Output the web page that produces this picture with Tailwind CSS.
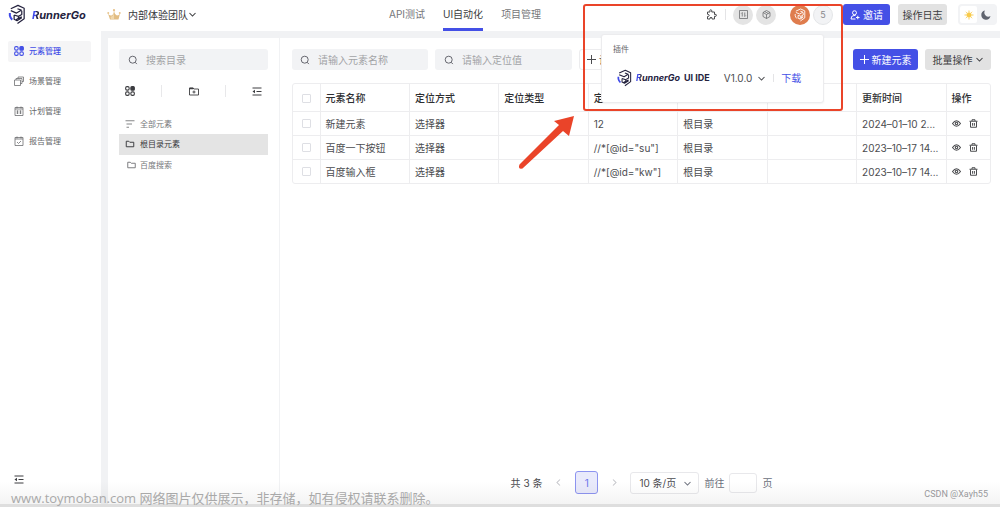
<!DOCTYPE html>
<html lang="zh-CN">
<head>
<meta charset="utf-8">
<meta name="viewport" content="width=device-width, initial-scale=1">
<title>RunnerGo</title>
<script src="https://cdn.jsdelivr.net/npm/@tailwindcss/browser@4"></script>
</head>
<body class="relative flex min-h-screen flex-col overflow-x-hidden bg-white font-['Inter','Noto_Sans_CJK_SC',sans-serif] text-[10px] leading-4 text-[#4b4c4f]">

<svg class="hidden" aria-hidden="true">
  <symbol id="mark" viewBox="0 0 36 44">
    <g fill="none" stroke-linejoin="round" stroke="#25233f" stroke-width="2.600">
      <path d="M5 10 20 3l13 6v22L19 41"/>
      <path d="M5 14l12 5 10-6-8-3"/>
      <path d="M12 23l9 3v4l-5 3M21 26l7-4v-8M21 30l7-3M12 23v9l6 3 10-6"/>
      <path d="M3 19v5q1 5 5 9" stroke="#3f49e8" stroke-width="4.200"/>
    </g>
  </symbol>
  <symbol id="search" viewBox="0 0 16 16"><g fill="none" stroke="currentColor" stroke-width="1.6"><circle cx="7.5" cy="7.5" r="5.6"/><path d="m11.2 11.5 3 3"/></g></symbol>
  <symbol id="down" viewBox="0 0 12 12"><path d="m2 4 4 4 4-4" fill="none" stroke="currentColor" stroke-width="1.4"/></symbol>
  <symbol id="apps" viewBox="0 0 20 20"><g fill="none" stroke="currentColor" stroke-width="2.2"><rect x="1.3" y="1.3" width="7" height="7" rx="2.6"/><rect x="11.7" y="1.3" width="7" height="7" rx="2" fill="currentColor"/><rect x="1.3" y="11.7" width="7" height="7" rx="2.6"/><rect x="11.7" y="11.7" width="7" height="7" rx="2.6"/></g></symbol>
  <symbol id="folder" viewBox="0 0 18 16"><path d="M1.5 13.5v-11h5l2 2h8v9z" fill="none" stroke="currentColor" stroke-width="1.9" stroke-linejoin="round"/></symbol>
  <symbol id="indent" viewBox="0 0 20 18"><path d="M1 2h18M9 9h10M1 16h18" fill="none" stroke="currentColor" stroke-width="2"/><path d="M1 9l5-3.5v7z" fill="currentColor"/></symbol>
  <symbol id="eye" viewBox="0 0 18 14"><g fill="none" stroke="currentColor" stroke-width="2.2"><path d="M1 7q8-11 16 0-8 11-16 0z"/><circle cx="9" cy="7" r="2.4"/></g></symbol>
  <symbol id="trash" viewBox="0 0 18 18"><path d="M1 4.500h16M6 4V1.500h6V4M3 5v11.500h12V5M7.200 8v5.500M10.800 8v5.500" fill="none" stroke="currentColor" stroke-width="2"/></symbol>
</svg>

<header class="flex h-[31px] shrink-0 items-center pb-[2px]">
  <a href="#" class="ml-[8px] flex w-[99px] items-center gap-[6px] text-[11px] font-bold text-[#25233f]">
    <svg class="h-[21px] w-[18px] shrink-0"><use href="#mark"/></svg>
    <span class="italic"><span class="bg-linear-to-r from-[#3f49e8] from-55% to-[#25233f] to-65% bg-clip-text text-transparent">R</span>unnerGo</span>
  </a>
  <button class="flex w-[282px] items-center whitespace-nowrap text-[#38393c]">
    <svg class="mr-[7px] h-[11px] w-[14px]" viewBox="0 0 28 22"><path d="M2 9q3 5 7 4 5-2 5-10 1 8 6 10 4 0 6-4l-3 12H6z" fill="#e2bd83"/><path d="M14 5q-1 9-7 11l1 4h6z" fill="#f0d7ab"/><g fill="#e8c48c"><circle cx="2.500" cy="8" r="2"/><circle cx="14" cy="2.500" r="2.300"/><circle cx="25.500" cy="8" r="2"/></g></svg>
    内部体验团队
    <svg class="size-[9px]"><use href="#down"/></svg>
  </button>
  <nav class="flex h-[31px] translate-y-px gap-[18px] whitespace-nowrap text-[#76777a]">
    <a href="#" class="pt-[6px]">API测试</a>
    <a href="#" class="border-b-[3px] border-[#4450e6] pt-[6px] text-[#3c3d40]">UI自动化</a>
    <a href="#" class="pt-[6px]">项目管理</a>
  </nav>
  <div class="ml-auto flex items-center pr-[3px]">
    <button aria-label="插件" class="mr-[7px] border-r border-[#e4e4e6] pr-[8px]"><svg class="size-[11px]" viewBox="0 0 22 22"><path d="M3 6h5q-1.500-4.500 1.500-4.500T11.500 6H17v5q4-1.500 4 1.500t-4 2V20h-5q.5-3.500-2-3.500T8 20H3v-5q3.500 0 3.500-2.200T3 10.500z" fill="none" stroke="#4b4c4f" stroke-width="2" stroke-linejoin="round"/></svg></button>
    <button aria-label="环境" class="mr-[3px] flex size-[20px] items-center justify-center rounded-full bg-[#e4e4e4] text-[#66676a]"><svg class="size-[9px]" viewBox="0 0 18 18"><path d="M1 1h16v16H1zM6.500 13V5L4.500 7M11.500 5v8l2-2" fill="none" stroke="currentColor" stroke-width="1.500"/></svg></button>
    <button aria-label="组件" class="mr-[14px] flex size-[20px] items-center justify-center rounded-full bg-[#e4e4e4] text-[#66676a]"><svg class="size-[9px]" viewBox="0 0 18 18"><path d="M9 1l7 4v8l-7 4-7-4V5zM2 5l7 4 7-4M9 9v8M5.500 3l7 4" fill="none" stroke="currentColor" stroke-width="1.500"/></svg></button>
    <button aria-label="账户" class="mr-[3px] flex size-[20px] items-center justify-center rounded-full bg-[#df7c4d]"><svg class="size-[14px]" viewBox="0 0 36 44" fill="none" stroke="#fff" stroke-width="2.800"><path d="M5 10 20 3l13 6v22L19 41M5 14l12 5 10-6-8-3M12 23l9 3v4l-5 3M21 26l7-4v-8M21 30l7-3M12 23v9l6 3 10-6M3 19v5q1 5 5 9"/></svg></button>
    <button class="mr-[10px] size-[20px] rounded-full border border-[#e4e6e8] bg-[#f2f3f5] text-[9px] text-[#88898c]">5</button>
    <button class="mr-[8px] flex h-[21px] w-[47px] items-center justify-center gap-[3px] rounded-[3px] bg-[#4450e6] whitespace-nowrap text-white"><svg class="size-[10px]" viewBox="0 0 20 20" fill="none" stroke="currentColor" stroke-width="2"><circle cx="9" cy="5.500" r="4"/><path d="M11 11H8q-6 0-6 7h9M12 15h7M15.500 11.500v7"/></svg>邀请</button>
    <button class="mr-[11px] h-[21px] w-[49px] rounded-[3px] bg-[#e2e2e2] whitespace-nowrap text-[#3c3d40]">操作日志</button>
    <div class="flex h-[21px] w-[39px] items-center rounded-[4px] bg-[#f2f3f5] p-[2px]">
      <button aria-label="浅色" class="flex h-[17px] w-[17px] items-center justify-center rounded-[2px] bg-white"><svg class="size-[10px]" viewBox="0 0 20 20" stroke="#f8cb4b" stroke-width="1.800"><circle cx="10" cy="10" r="4.500" fill="#f8cb4b"/><path d="M10 1v3M10 16v3M1 10h3M16 10h3M3.600 3.600l2 2M14.400 14.400l2 2M3.600 16.400l2-2M14.400 5.600l2-2"/></svg></button>
      <button aria-label="深色" class="flex h-[17px] w-[18px] items-center justify-center"><svg class="size-[10px]" viewBox="0 0 20 20"><path d="M8 1a8 8 0 0 0 11 11A9.300 9.300 0 1 1 8 1z" fill="#60646f"/></svg></button>
    </div>
  </div>
</header>

<div class="flex grow">
  <aside class="flex w-[101px] shrink-0 flex-col px-[8px] pt-[10px]">
    <nav class="flex flex-col gap-[9px] text-[8px] text-[#66676a]">
      <a href="#" class="flex h-[21px] w-[83px] items-center gap-[5px] rounded-[2px] bg-[#f5f5f6] pb-[2px] pl-[6px] font-medium text-[#4450e6]"><svg class="size-[10px]"><use href="#apps"/></svg>元素管理</a>
      <a href="#" class="flex h-[21px] items-center gap-[5px] pb-[2px] pl-[6px]"><svg class="size-[10px]" viewBox="0 0 20 20" fill="none" stroke="currentColor" stroke-width="1.500"><path d="M1 8h12v11H1zM4 8V5h12v10h-3M8 5V2h11v9h-3"/></svg>场景管理</a>
      <a href="#" class="flex h-[21px] items-center gap-[5px] pb-[2px] pl-[6px]"><svg class="size-[10px]" viewBox="0 0 20 20" fill="none" stroke="currentColor" stroke-width="1.500"><path d="M2 3h16v16H2zM2 6h16M6 1v4M14 1v4M5 10h4M11 10h4M5 14h4M11 14h4M7 9v7M13 9v7"/></svg>计划管理</a>
      <a href="#" class="flex h-[21px] items-center gap-[5px] pb-[2px] pl-[6px]"><svg class="size-[10px]" viewBox="0 0 20 20" fill="none" stroke="currentColor" stroke-width="1.500"><path d="M2 3h16v16H2zM2 6h16M6 1v4M14 1v4M6 12l3 3 5-5"/></svg>报告管理</a>
    </nav>
    <button aria-label="收起" class="mt-auto mb-[23px] ml-[6px] size-[10px] text-[#3c3d40]"><svg class="h-[9px] w-[10px]"><use href="#indent"/></svg></button>
  </aside>

  <div class="flex min-w-0 grow border-t-[7px] border-l-[7px] border-[#f1f2f4]">
    <section class="w-[172px] shrink-0 border-r border-[#f1f2f4] px-[11px] pt-[11px]">
      <label class="flex h-[21px] items-center gap-[8px] rounded-[3px] bg-[#f2f3f5] px-[9px] text-[#66676f]">
        <svg class="size-[10px] shrink-0"><use href="#search"/></svg>
        <input aria-label="搜索目录" placeholder="搜索目录" class="w-full min-w-0 outline-none placeholder:text-[#a2a3a6]">
      </label>
      <div class="mt-[14px] flex h-[14px] items-center justify-between px-[6px] text-[#3c3d40]">
        <button aria-label="元素"><svg class="size-[10px]"><use href="#apps"/></svg></button>
        <span class="h-[12px] w-px bg-[#e8e8ea]"></span>
        <button aria-label="新建目录"><svg class="h-[9px] w-[10px]" viewBox="0 0 20 18" fill="none" stroke="currentColor" stroke-width="1.800"><path d="M1 16V2h7l2 2h9v12zM10 7v6M7 10h6"/><path d="M1 3h8" stroke-width="3"/></svg></button>
        <span class="h-[12px] w-px bg-[#e8e8ea]"></span>
        <button aria-label="展开"><svg class="h-[9px] w-[10px]"><use href="#indent"/></svg></button>
      </div>
      <ul class="mt-[16px] text-[8px] text-[#77787b]">
        <li class="flex h-[20px] items-center gap-[5px] pl-[6px]"><svg class="h-[8px] w-[10px]" viewBox="0 0 20 16"><path d="M1 1.500h18M3 8h11M3 14.500h5" stroke="currentColor" stroke-width="1.800"/></svg>全部元素</li>
        <li class="flex h-[21px] items-center gap-[5px] bg-[#e4e4e4] pb-px pl-[6px] text-[#38393c]"><svg class="h-[8px] w-[10px]"><use href="#folder"/></svg>根目录元素</li>
        <li class="flex h-[20px] items-center gap-[4px] pl-[8px]"><svg class="h-[8px] w-[9px]"><use href="#folder"/></svg>百度搜索</li>
      </ul>
    </section>

    <main class="flex min-w-0 grow flex-col pt-[11px] pr-[9px] pl-[12px]">
      <div class="flex items-center">
        <label class="mr-[7px] flex h-[21px] w-[136px] items-center gap-[8px] rounded-[3px] bg-[#f2f3f5] px-[8px] text-[#66676f]">
          <svg class="size-[10px] shrink-0"><use href="#search"/></svg>
          <input aria-label="元素名称" placeholder="请输入元素名称" class="w-full min-w-0 outline-none placeholder:text-[#a2a3a6]">
        </label>
        <label class="mr-[7px] flex h-[21px] w-[137px] items-center gap-[8px] rounded-[3px] bg-[#f2f3f5] px-[9px] text-[#66676f]">
          <svg class="size-[10px] shrink-0"><use href="#search"/></svg>
          <input aria-label="定位值" placeholder="请输入定位值" class="w-full min-w-0 outline-none placeholder:text-[#a2a3a6]">
        </label>
        <button class="flex h-[21px] w-[60px] items-center gap-[3px] rounded-[3px] border border-[#ececee] pl-[7px] whitespace-nowrap"><svg class="size-[9px]" viewBox="0 0 9 9"><path d="M4.500 0v9M0 4.500h9" stroke="#4b4c4f"/></svg>设置</button>
        <button class="mr-[7px] ml-auto flex h-[21px] w-[65px] items-center justify-center gap-[3px] rounded-[3px] bg-[#4450e6] whitespace-nowrap text-white"><svg class="size-[9px]" viewBox="0 0 9 9"><path d="M4.500 0v9M0 4.500h9" stroke="currentColor"/></svg>新建元素</button>
        <button class="flex h-[21px] w-[66px] items-center justify-center gap-[2px] rounded-[3px] bg-[#e2e2e2] whitespace-nowrap text-[#3c3d40]">批量操作<svg class="size-[9px]"><use href="#down"/></svg></button>
      </div>

      <div class="mt-[13px] overflow-hidden rounded-[3px] border border-[#ededef]">
        <table class="w-full table-fixed border-collapse text-left whitespace-nowrap [&_td]:border-t [&_td]:border-l [&_td]:border-[#ededef] [&_td]:px-[5px] [&_td]:pt-px [&_td]:first:border-l-0 [&_th]:border-l [&_th]:border-[#ededef] [&_th]:px-[5px] [&_th]:pt-[2px] [&_th]:font-medium [&_th]:first:border-l-0">
          <colgroup><col class="w-[27px]"><col><col><col><col><col><col><col><col class="w-[44px]"></colgroup>
          <thead class="text-[#2d2e31]">
            <tr class="h-[27px]"><th><input type="checkbox" aria-label="全选" class="ml-[4px] block size-[9px] appearance-none rounded-[1px] border border-[#dedfe4]"></th><th>元素名称</th><th>定位方式</th><th>定位类型</th><th>定位值</th><th></th><th></th><th>更新时间</th><th>操作</th></tr>
          </thead>
          <tbody>
            <tr class="h-[24px]"><td><input type="checkbox" aria-label="选择新建元素" class="ml-[4px] block size-[9px] appearance-none rounded-[1px] border border-[#dedfe4]"></td><td>新建元素</td><td>选择器</td><td></td><td>12</td><td>根目录</td><td></td><td>2024–01–10 2...</td><td><span class="flex items-center gap-[8px]"><button aria-label="查看"><svg class="h-[7px] w-[9px]"><use href="#eye"/></svg></button><button aria-label="删除"><svg class="size-[9px]"><use href="#trash"/></svg></button></span></td></tr>
            <tr class="h-[24px]"><td><input type="checkbox" aria-label="选择百度一下按钮" class="ml-[4px] block size-[9px] appearance-none rounded-[1px] border border-[#dedfe4]"></td><td>百度一下按钮</td><td>选择器</td><td></td><td>//*[@id="su"]</td><td>根目录</td><td></td><td>2023–10–17 14...</td><td><span class="flex items-center gap-[8px]"><button aria-label="查看"><svg class="h-[7px] w-[9px]"><use href="#eye"/></svg></button><button aria-label="删除"><svg class="size-[9px]"><use href="#trash"/></svg></button></span></td></tr>
            <tr class="h-[24px]"><td><input type="checkbox" aria-label="选择百度输入框" class="ml-[4px] block size-[9px] appearance-none rounded-[1px] border border-[#dedfe4]"></td><td>百度输入框</td><td>选择器</td><td></td><td>//*[@id="kw"]</td><td>根目录</td><td></td><td>2023–10–17 14...</td><td><span class="flex items-center gap-[8px]"><button aria-label="查看"><svg class="h-[7px] w-[9px]"><use href="#eye"/></svg></button><button aria-label="删除"><svg class="size-[9px]"><use href="#trash"/></svg></button></span></td></tr>
          </tbody>
        </table>
      </div>

      <div class="mt-auto mb-[13px] flex items-center justify-center whitespace-nowrap">
        <span class="mr-[12px]">共 3 条</span>
        <button aria-label="上一页" class="mr-[12px] text-[#c4c5ca]"><svg class="size-[9px] rotate-90"><use href="#down"/></svg></button>
        <button class="mr-[12px] size-[23px] rounded-[3px] border border-[#8d94f0] bg-[#e9eafb] text-[#6b73ec]">1</button>
        <button aria-label="下一页" class="mr-[11px] text-[#c4c5ca]"><svg class="size-[9px] -rotate-90"><use href="#down"/></svg></button>
        <div class="relative mr-[5px]">
          <select aria-label="每页条数" class="h-[22px] w-[69px] appearance-none rounded-[3px] border border-[#e8e8eb] bg-white pl-[8px]"><option>10 条/页</option></select>
          <svg class="pointer-events-none absolute top-[7px] right-[7px] size-[9px] text-[#6b6f7c]"><use href="#down"/></svg>
        </div>
        <label for="page" class="mr-[5px] text-[#6b6f7c]">前往</label>
        <input id="page" class="mr-[5px] h-[20px] w-[28px] rounded-[3px] border border-[#e8e8eb] bg-white">
        <span class="text-[#6b6f7c]">页</span>
      </div>
    </main>
  </div>
</div>

<!-- plugin menu -->
<div class="absolute top-[34px] right-[176px] h-[69px] w-[223px] rounded-[3px] border border-[#ececee] bg-white px-[11px] pt-[6px] shadow-xs">
  <div class="text-[8px] text-[#66676a]">插件</div>
  <div class="mt-[12px] flex items-center pl-[4px] whitespace-nowrap">
    <svg class="mr-[4px] h-[18px] w-[15px]"><use href="#mark"/></svg>
    <span class="mr-[14px] flex gap-[4px] text-[9px] font-bold text-[#25233f]"><span class="italic"><span class="bg-linear-to-r from-[#3f49e8] from-55% to-[#25233f] to-65% bg-clip-text text-transparent">R</span>unnerGo</span><span>UI IDE</span></span>
    <button class="mr-[7px] flex items-center gap-[5px]">V1.0.0<svg class="size-[9px]"><use href="#down"/></svg></button>
    <a href="#" class="flex items-center gap-[7px] text-[#4450e6]"><span class="h-[8px] w-px bg-[#e4e4e6]"></span>下载</a>
  </div>
</div>

<!-- annotation -->
<div class="pointer-events-none absolute top-[4px] right-[157px] h-[107px] w-[260px] rounded-[3px] border-2 border-[#ea4429]"></div>
<svg class="pointer-events-none absolute top-[114px] right-[423px] h-[58px] w-[60px]" viewBox="0 0 60 58"><path d="M57 2 37 7l5 4L2.500 50.500q-2 5 3 4L46 17l6 5z" fill="#ea4429"/></svg>

<div class="pointer-events-none absolute inset-x-0 bottom-0 h-[26px] bg-linear-to-b from-transparent to-black/5"></div>
<div class="pointer-events-none absolute inset-x-0 bottom-0 h-[3px] bg-[#dedede]"></div>
<div class="absolute bottom-[1px] left-[11px] font-['Open_Sans','Noto_Sans_CJK_SC',sans-serif] text-[13px] whitespace-nowrap text-[#a9a9a9]">www.toymoban.com 网络图片仅供展示，非存储，如有侵权请联系删除。</div>
<div class="absolute right-[12px] bottom-[5px] font-['Roboto',sans-serif] text-[9px] text-[#98989b]">CSDN @Xayh55</div>
</body>
</html>
